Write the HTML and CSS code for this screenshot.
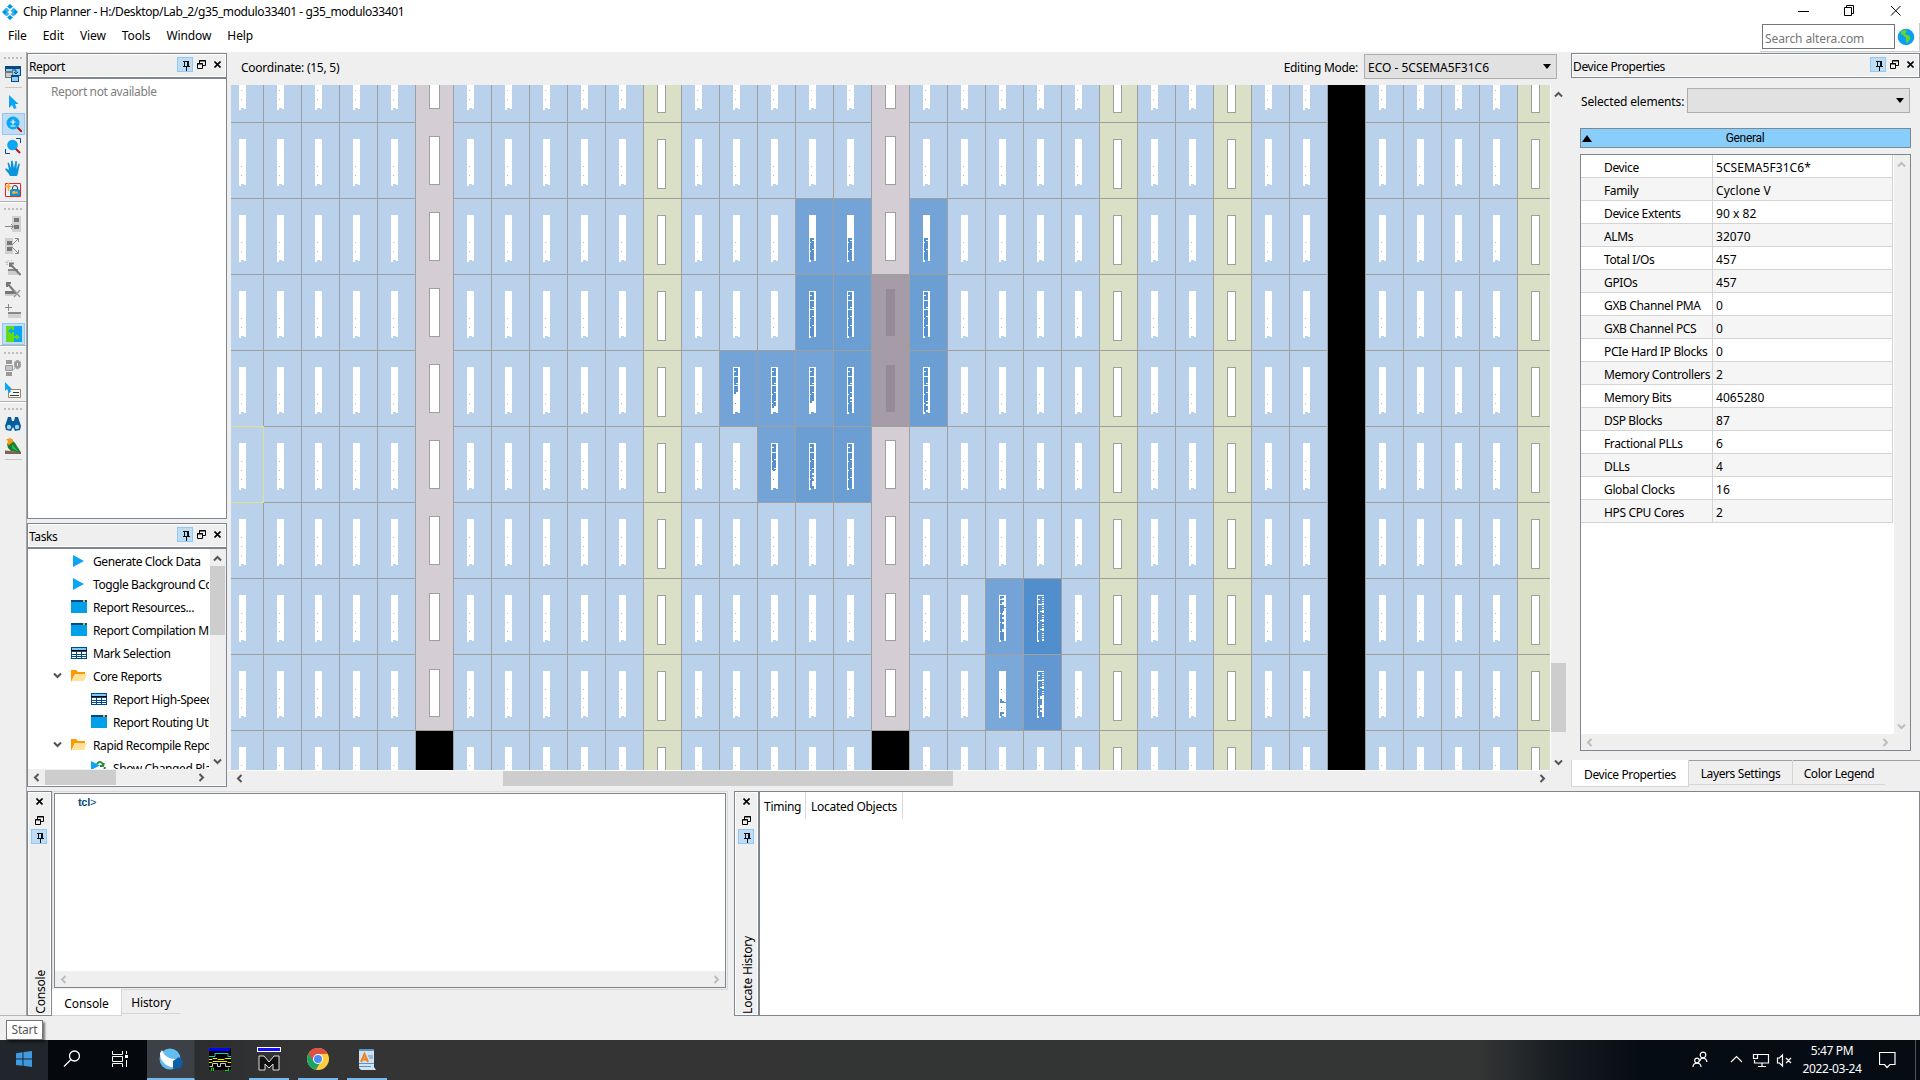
FILE: index.html
```html
<!DOCTYPE html>
<html lang="en">
<head>
<meta charset="utf-8">
<title>Chip Planner</title>
<link rel="stylesheet" href="styles.css">
</head>
<body>
<svg class="defs" aria-hidden="true">
  <symbol id="pin" viewBox="0 0 16 15"><path d="M7.500 4v6M6 4.500h6M6 9.500h7M9.500 10v4" fill="none" stroke="#111"/><path d="M11 4v6" stroke="#111" stroke-width="2"/></symbol>
  <symbol id="float" viewBox="0 0 9 9"><path d="M2.500 3V.5h6v5H6M2 1h7M0 4h6" fill="none" stroke="#000"/><path d="M.5 3.500h5v5h-5z" fill="none" stroke="#000"/></symbol>
  <symbol id="close" viewBox="0 0 7 7"><path d="M.5.5l6 6M6.500.5l-6 6" stroke="#000" stroke-width="1.600"/></symbol>
  <symbol id="up" viewBox="0 0 9 7"><path d="M1 5.500L4.500 2 8 5.500" fill="none" stroke="currentColor" stroke-width="2"/></symbol>
  <symbol id="down" viewBox="0 0 9 7"><path d="M1 1.500L4.500 5 8 1.500" fill="none" stroke="currentColor" stroke-width="2"/></symbol>
  <symbol id="left" viewBox="0 0 7 9"><path d="M5.500 1L2 4.500 5.500 8" fill="none" stroke="currentColor" stroke-width="2"/></symbol>
  <symbol id="right" viewBox="0 0 7 9"><path d="M1.500 1L5 4.500 1.500 8" fill="none" stroke="currentColor" stroke-width="2"/></symbol>
  <symbol id="play" viewBox="0 0 16 16"><path d="M2 2v12l11-6z" fill="#0aa5f5"/></symbol>
  <symbol id="window" viewBox="0 0 16 16"><path d="M0 2h16v12H0z" fill="#00a0e8"/><path d="M0 1h16v2H0z" fill="#004a86"/><path d="M12 1h2v2h-2z" fill="#f9a825"/></symbol>
  <symbol id="table" viewBox="0 0 16 16"><path d="M0 2h16v12H0z" fill="#004a86"/><path d="M1 3h14v2H1z" fill="#7ec8f2"/><path d="M0 5h16v1H0z" fill="#000"/><path d="M1 7h4v2H1zM6 7h4v2H6zM11 7h4v2h-4zM1 10h4v1H1zM6 10h4v1H6zM11 10h4v1h-4zM1 12h4v1H1zM6 12h4v1H6zM11 12h4v1h-4z" fill="#fff"/></symbol>
  <symbol id="folder" viewBox="0 0 16 16"><path d="M0 2h5l2 2h7v2H4L0 14z" fill="#f90"/><path d="M4.500 6H16l-3 7H1z" fill="#ffe29a"/></symbol>
  <symbol id="changed" viewBox="0 0 16 16"><path d="M6 4c2-3 5-3 6 1M9 6h3l1-3M14 7l-1 4M8 11l-3 3" fill="none" stroke="#2e8b3d" stroke-width="2"/><path d="M0 1v9l9-4.500z" fill="#0aa5f5"/></symbol>
  <symbol id="cursor" viewBox="0 0 16 16"><path d="M4 1v13l3-3 2 4 2.500-1L10 10h3.500z" fill="#0aa5f5"/></symbol>
</svg>

<header class="top">
  <div class="titlebar">
    <svg class="logo" width="16" height="16" viewBox="0 0 16 16"><g fill="#0095e0"><path d="M8 0l3 2.500-3 2.500-3-2.500zM8 11l3 2.500L8 16l-3-2.500zM0 8l3-3 2.500 3L3 11zM16 8l-3-3-2.500 3 2.500 3z"/><path d="M4.500 3.500l3 3-2 1.500-3-3zM11.500 3.500l2 2-3 3-2-1.500zM4.500 12.500l-2-2 3-2.500 2 2zM11.500 12.500l2-2-3-2-2 1.500z" fill="#35b2ee"/></g></svg>
    <h1 class="title">Chip Planner - H:/Desktop/Lab_2/g35_modulo33401 - g35_modulo33401</h1>
    <svg class="winctl" width="108" height="14" viewBox="0 0 108 14"><path d="M0 8.500h11M46.500 4.500h7v8h-7zM48.500 4V2.500h7v8H54M93 3l9.500 9.500M102.500 3L93 12.500" fill="none" stroke="#000"/></svg>
  </div>
  <div class="menubar">
    <nav class="menu"><span>File</span><span>Edit</span><span>View</span><span>Tools</span><span>Window</span><span>Help</span></nav>
    <div class="search"><div class="search-box">Search altera.com</div>
      <svg width="18" height="18" viewBox="0 0 18 18"><circle cx="9" cy="9" r="8.300" fill="#0a9ff0"/><path d="M4 3l4-1.500 2 2-2 2 1 1 3 1 1.500 2.500-3 5-1.500-1V10L6 7 4 6z" fill="#67d62a"/></svg></div>
  </div>
</header>

<div class="work">
  <aside class="toolbar">
    <div class="handle"></div>
    <div class="tool first"><svg width="16" height="16" viewBox="0 0 16 16"><path d="M0 0h16v10H0z" fill="#0a4a80"/><path d="M1 3h14v6H1z" fill="#8fd0f5"/><path d="M0 5h8v7H0z" fill="#777"/><path d="M1 7h6v4H1z" fill="#ccc"/><path d="M6 9h8v7H6z" fill="#0a4a80"/><path d="M7 11h6v4H7z" fill="#8fd0f5"/><path d="M7 4h4v4M9 6l2 2 2-2" stroke="#0a4a80" fill="none"/></svg></div>
    <div class="sep"></div>
    <div class="tool"><svg width="16" height="16"><use href="#cursor"/></svg></div>
    <div class="tool on"><svg width="16" height="16" viewBox="0 0 16 16"><path d="M11 11l5 5" stroke="#b11" stroke-width="2"/><circle cx="7" cy="7" r="6.500" fill="#0aa5f5"/><path d="M4.500 6h5M7 3.500v5M4.500 10h5" stroke="#fff" stroke-width="1.200"/></svg></div>
    <div class="tool"><svg width="16" height="16" viewBox="0 0 16 16"><path d="M10 10l5 5" stroke="#b11" stroke-width="2"/><circle cx="7.500" cy="7" r="5.300" fill="#0aa5f5"/><path d="M11 .5h4.500V5M.5 11v4.500H5" fill="none" stroke="#0a4aa0"/></svg></div>
    <div class="tool"><svg width="16" height="16" viewBox="0 0 16 16"><path d="M5 16c-1-3-4-5-5-7l1-.7L4 10 2.500 3l1.300-.5L6 8V1l1.500-.5L9 8l1.500-7 1.500.5L11.500 9l2-5.500 1.300.5L13 13l-1 3z" fill="#0a94dc"/></svg></div>
    <div class="tool"><svg width="16" height="14" viewBox="0 0 16 14"><path d="M.5.5h15v13H.5z" fill="none" stroke="#e22" /><path d="M5 13V7l2-1h6l2 1v6z" fill="#0a94dc"/><path d="M7.500 6V5a2.500 2.500 0 0 1 5 0v1" fill="none" stroke="#335"/><path d="M3.500 0v8M0 3.500h6" stroke="#f9a825" stroke-width="1.600"/><path d="M7 9.500h6M9 8v3" stroke="#f9a825" stroke-width="2"/></svg></div>
    <div class="rule"></div>
    <div class="handle"></div>
    <div class="tool"><svg width="16" height="16" viewBox="0 0 16 16"><path d="M7 0h9v16H7z" fill="#d0d0d0"/><path d="M9 2h5v4H9zM9 9h5v4H9z" fill="#777"/><path d="M0 10.500h8M6 8l2.500 2.500L6 13" fill="none" stroke="#888"/></svg></div>
    <div class="tool"><svg width="16" height="16" viewBox="0 0 16 16"><path d="M0 0h8v16H0z" fill="#d0d0d0"/><path d="M2 3h5v4H2zM2 9h5v4H2z" fill="#777"/><path d="M7 7l6-6M10 .5h3.500V4M7 9l6 6M10 15.500h3.500V12" fill="none" stroke="#888"/></svg></div>
    <div class="tool"><svg width="16" height="16" viewBox="0 0 16 16"><path d="M3 10h10v5H3z" fill="#ccc"/><path d="M3 9h10v2H3z" fill="#888"/><path d="M5 4l10.500 11" stroke="#777" stroke-width="2"/><path d="M5 7V3.500h4" fill="none" stroke="#777" stroke-width="2"/><path d="M0 2l3 1M3 0v2M1 5l2-1M6 1l1-1" stroke="#bbb"/></svg></div>
    <div class="tool"><svg width="16" height="16" viewBox="0 0 16 16"><path d="M0 9h11v3H0z" fill="#777"/><path d="M0 12h9v2H0z" fill="#ccc"/><path d="M2 1l7 8M2 5V1h4" fill="none" stroke="#777" stroke-width="2"/><path d="M9 8l6 7M15 8l-6 7" stroke="#999" stroke-width="1.500"/></svg></div>
    <div class="tool"><svg width="16" height="16" viewBox="0 0 16 16"><path d="M3.500 0v7M0 3.500h7" stroke="#888"/><path d="M3 8h13v2H3z" fill="#888"/><path d="M3 10h13v4H3z" fill="#d0d0d0"/></svg></div>
    <div class="tool on"><svg width="16" height="16" viewBox="0 0 16 16"><path d="M0 0h8v16H0z" fill="#62dc14"/><path d="M8 0h8v16H8z" fill="#0aa5f5"/><path d="M2 5l4-3v2h3v2H6v2z" fill="#0aa5f5"/><path d="M14 11l-4-3v2H7v2h3v2z" fill="#62dc14"/></svg></div>
    <div class="rule"></div>
    <div class="handle"></div>
    <div class="tool"><svg width="16" height="16" viewBox="0 0 16 16"><path d="M1 0h6v4H1zM1 12h6v4H1z" fill="#999"/><path d="M.5 5.500h7v5h-7z" fill="#c4c4c4" stroke="#999"/><path d="M12.500 0l3 2v5l-3 2-3-2V2zM8 10l2-2" fill="#999" stroke="#aaa"/><path d="M12.500 3v3" stroke="#eee"/></svg></div>
    <div class="tool"><svg width="16" height="16" viewBox="0 0 16 16"><path d="M3.500 7.500h12v8h-12z" fill="#fff8e0" stroke="#a08070"/><path d="M8 10.500h6M5 13.500h9" stroke="#0a4a80"/><path d="M0 0v9l2-2 2 4 2-1-1-3h2z" fill="#0aa5f5"/></svg></div>
    <div class="rule"></div>
    <div class="handle"></div>
    <div class="tool"><svg width="16" height="14" viewBox="0 0 16 14"><path d="M3 0h3l1 4h2l1-4h3l3 9-1 4-5 1-2-4-2 4-5-1-1-4z" fill="#0a5c9c"/><circle cx="4" cy="10" r="2.200" fill="#9bd6f5"/><circle cx="12" cy="10" r="2.200" fill="#9bd6f5"/></svg></div>
    <div class="tool"><svg width="16" height="16" viewBox="0 0 16 16"><path d="M0 12.500l16 1.500v2H0z" fill="#806058"/><path d="M2 6l6-3 2 2 6 9.500-4-.5-6-1-3-3z" fill="#1d7a2e"/><path d="M7 6l7 8-7-3.500z" fill="#12c04a"/><path d="M1 1.500L5 0l3 1.500v2.500L4 7 2 6l1-3z" fill="#f59a1a"/></svg></div>
    <div class="sep"></div>
  </aside>

  <div class="docks">
    <div class="upper">
      <div class="left-dock">
        <section class="panel report">
          <div class="panel-head"><span>Report</span><div class="ctl"><svg class="pin"><use href="#pin"/></svg><svg class="flt"><use href="#float"/></svg><svg class="cls"><use href="#close"/></svg></div></div>
          <div class="report-body">Report not available</div>
        </section>
        <section class="panel tasks">
          <div class="panel-head"><span>Tasks</span><div class="ctl"><svg class="pin"><use href="#pin"/></svg><svg class="flt"><use href="#float"/></svg><svg class="cls"><use href="#close"/></svg></div></div>
          <div class="tree-wrap">
            <ul class="tree">
              <li><svg class="ic"><use href="#play"/></svg><span>Generate Clock Data</span></li>
              <li><svg class="ic"><use href="#play"/></svg><span>Toggle Background Color</span></li>
              <li><svg class="ic"><use href="#window"/></svg><span>Report Resources...</span></li>
              <li><svg class="ic"><use href="#window"/></svg><span>Report Compilation Messages</span></li>
              <li><svg class="ic"><use href="#table"/></svg><span>Mark Selection</span></li>
              <li class="parent"><svg class="arr"><use href="#down"/></svg><svg class="ic"><use href="#folder"/></svg><span>Core Reports</span></li>
              <li class="child"><svg class="ic"><use href="#table"/></svg><span>Report High-Speed Tiles</span></li>
              <li class="child"><svg class="ic"><use href="#window"/></svg><span>Report Routing Utilization</span></li>
              <li class="parent"><svg class="arr"><use href="#down"/></svg><svg class="ic"><use href="#folder"/></svg><span>Rapid Recompile Reports</span></li>
              <li class="child"><svg class="ic"><use href="#changed"/></svg><span>Show Changed Placement</span></li>
            </ul>
            <div class="vscroll"><svg class="av"><use href="#up"/></svg><i class="thumb tree-v"></i><svg class="av end"><use href="#down"/></svg></div>
          </div>
          <div class="hscroll tree-hs"><svg class="ah"><use href="#left"/></svg><i class="thumb tree-h"></i><svg class="ah end"><use href="#right"/></svg></div>
        </section>
      </div>

      <main class="center">
        <div class="mapbar"><span class="coord">Coordinate: (15, 5)</span><span class="mode">Editing Mode:</span><div class="combo mode-combo">ECO - 5CSEMA5F31C6<i class="tri"></i></div></div>
        <div class="map-area">
          <svg id="chip" class="chip" width="1319" height="685" viewBox="231 85 1319 685" shape-rendering="crispEdges"></svg>
          <div class="vscroll map-v"><svg class="av"><use href="#up"/></svg><i class="thumb map-vt"></i><svg class="av end"><use href="#down"/></svg></div>
        </div>
        <div class="hscroll map-h"><svg class="ah"><use href="#left"/></svg><i class="thumb map-ht"></i><svg class="ah end"><use href="#right"/></svg></div>
      </main>

      <aside class="right-dock">
        <div class="panel-head boxed"><span>Device Properties</span><div class="ctl"><svg class="pin"><use href="#pin"/></svg><svg class="flt"><use href="#float"/></svg><svg class="cls"><use href="#close"/></svg></div></div>
        <div class="selrow"><span>Selected elements:</span><div class="combo sel-combo"><i class="tri"></i></div></div>
        <div class="general"><i class="tri-up"></i><span>General</span></div>
        <div class="props">
          <div class="props-main">
            <dl>
              <dt>Device</dt><dd>5CSEMA5F31C6*</dd>
              <dt>Family</dt><dd>Cyclone V</dd>
              <dt>Device Extents</dt><dd>90 x 82</dd>
              <dt>ALMs</dt><dd>32070</dd>
              <dt>Total I/Os</dt><dd>457</dd>
              <dt>GPIOs</dt><dd>457</dd>
              <dt>GXB Channel PMA</dt><dd>0</dd>
              <dt>GXB Channel PCS</dt><dd>0</dd>
              <dt>PCIe Hard IP Blocks</dt><dd>0</dd>
              <dt>Memory Controllers</dt><dd>2</dd>
              <dt>Memory Bits</dt><dd>4065280</dd>
              <dt>DSP Blocks</dt><dd>87</dd>
              <dt>Fractional PLLs</dt><dd>6</dd>
              <dt>DLLs</dt><dd>4</dd>
              <dt>Global Clocks</dt><dd>16</dd>
              <dt>HPS CPU Cores</dt><dd>2</dd>
            </dl>
            <div class="vscroll off"><svg class="av"><use href="#up"/></svg><svg class="av end"><use href="#down"/></svg></div>
          </div>
          <div class="hscroll off props-h"><svg class="ah"><use href="#left"/></svg><svg class="ah end"><use href="#right"/></svg></div>
        </div>
        <div class="tabs dev-tabs"><span class="tab active">Device Properties</span><span class="tab">Layers Settings</span><span class="tab last">Color Legend</span></div>
      </aside>
    </div>

    <div class="lower">
      <section class="console">
        <div class="side-head"><svg class="cls"><use href="#close"/></svg><svg class="flt"><use href="#float"/></svg><svg class="pin"><use href="#pin"/></svg><span>Console</span></div>
        <div class="console-main">
          <div class="console-frame"><div class="console-box"><div class="prompt">tcl<b>&gt;</b></div><div class="hscroll off console-h"><svg class="ah"><use href="#left"/></svg><svg class="ah end"><use href="#right"/></svg></div></div></div>
          <div class="tabs con-tabs"><span class="tab active">Console</span><span class="tab last">History</span></div>
        </div>
      </section>
      <section class="locate">
        <div class="side-head"><svg class="cls"><use href="#close"/></svg><svg class="flt"><use href="#float"/></svg><svg class="pin"><use href="#pin"/></svg><span>Locate History</span></div>
        <div class="locate-body"><span class="th">Timing</span><span class="th wide">Located Objects</span></div>
      </section>
    </div>
  </div>
</div>

<div class="status"><div class="tooltip">Start</div></div>

<footer class="taskbar">
  <div class="tb start"><svg width="16" height="16" viewBox="0 0 16 16"><path d="M0 2.200l6.500-.9v6.200H0zM7.500 1.100L16 0v7.500H7.500zM0 8.500h6.500v6.300L0 13.900zM7.500 8.500H16V16l-8.500-1.200z" fill="#3f9ae0"/></svg></div>
  <div class="tb dark"><svg width="18" height="18" viewBox="0 0 18 18"><circle cx="11.500" cy="6" r="5" fill="none" stroke="#fff" stroke-width="1.300"/><path d="M8 9.500L1 16.500" stroke="#fff" stroke-width="1.300"/></svg></div>
  <div class="tb dark view"><svg width="17" height="16" viewBox="0 0 17 16"><path d="M.5 0v3.500h10V0M.5 5.500h10v5H.5zM.5 16v-3.500h10V16M14.500 0v3M14.500 9v7" fill="none" stroke="#fff"/><path d="M13 4h3v3h-3z" fill="#fff"/></svg></div>
  <div class="tb active"><svg width="24" height="24" viewBox="0 0 24 24"><circle cx="11" cy="12" r="10.500" fill="#64bdf0"/><path d="M1 6l2-3c2 6 7 9 13 9l1 8c-5 1-9-1-12-4C2 13 1 10 1 6z" fill="#fff"/><path d="M14 14l6-4 4 4-2 7-8 1z" fill="#0a5fa8"/></svg></div>
  <div class="tb grad"><svg width="24" height="24" viewBox="0 0 24 24"><path d="M.5.5h23v23H.5z" fill="#000" stroke="#333"/><path d="M1 1h21v3H1z" fill="#00f"/><path d="M1 9.500h6V6.500h13v3h3" fill="none" stroke="#1cc"/><path d="M1 12.500h3l1-1h4l1 1h6l1-1h6M1 15.500h3l1-1h14l1 1h3" fill="none" stroke="#ee0"/><path d="M1.500 19.500h3v-3h5v3h3v-3h5v3h5" fill="none" stroke="#ccc"/><path d="M3.500 24v-3h2v3M17 23.500h3M20.500 21v3" stroke="#0d0" fill="none"/></svg></div>
  <div class="tb run wide"><svg width="24" height="24" viewBox="0 0 24 24"><path d="M0 0h24v5H0z" fill="#fff"/><path d="M1 1h22v3H1z" fill="#11f"/><path d="M2 23V9h5l5 6 5-6h5v14h-6v-6l-4 4-4-4v6z" fill="#111" stroke="#ddd"/></svg></div>
  <div class="tb run"><svg width="22" height="22" viewBox="0 0 22 22"><circle cx="11" cy="11" r="11" fill="#ffcd40"/><path d="M11 11L1.500 5.500A11 11 0 0 0 9 21.800l5-8.500z" fill="#1da462"/><path d="M11 6h9.800A11 11 0 0 0 1.500 5.500L6.300 13z" fill="#dd5144"/><circle cx="11" cy="11" r="5" fill="#fff"/><circle cx="11" cy="11" r="4" fill="#4c8bf5"/></svg></div>
  <div class="tb run"><svg width="20" height="21" viewBox="0 0 20 21"><path d="M2 0h15v18l2 3H4l-2-2z" fill="#cfe3f3"/><path d="M2 0h15v2H2zM2 14h15v1H2zM2 17h12v1H2z" fill="#5b93c4"/><path d="M4 13L7.500 5 11 13M5 10.500h5" fill="none" stroke="#f08020" stroke-width="2"/><path d="M11 7h5M12 9h4" stroke="#5b93c4"/></svg></div>
  <div class="tray">
    <svg width="100" height="18" viewBox="0 0 100 18"><g fill="none" stroke="#fff" stroke-width="1.200"><circle cx="11" cy="4" r="2.800"/><path d="M8 10c0-4 6-4 7 1"/><circle cx="5" cy="9.500" r="2.300"/><path d="M1 16c0-5 8-5 8 0M39 11l5.500-5.500L50 11"/><path d="M65.500 3.500H76.500v8.500H62.500V9M66 15.500h8M70 12v3M61.500 3.500h4v4h-4z"/><path d="M85.500 7v5h2l3 3V4l-3 3zM94 7l5 5M99 7l-5 5"/></g></svg>
    <div class="clock"><span>5:47 PM</span><span>2022-03-24</span></div>
    <svg width="17" height="17" viewBox="0 0 17 17"><path d="M.5.500h15.500v12h-5l-3 3-2.500-3H.5z" fill="none" stroke="#fff" stroke-width="1.200"/></svg>
  </div>
</footer>
<script src="chip.js"></script>
</body>
</html>
```
FILE: styles.css
```css
* { box-sizing: border-box; }
html, body { height: 100%; }
body { margin: 0; width: 1920px; height: 1080px; overflow: hidden; display: flex; flex-direction: column; background: #efefef; color: #000; font: 12px/16px "Noto Sans", sans-serif; letter-spacing: -0.38px; white-space: nowrap; }
h1, ul, dl, dd { margin: 0; padding: 0; }
.defs { display: none; }
svg { display: block; flex: none; }

.top { height: 52px; background: #fff; flex: none; display: flex; flex-direction: column; }
.titlebar { height: 23px; display: flex; align-items: center; padding-left: 2px; }
.title { font-size: 12px; font-weight: 400; margin-left: 5px; flex: 1; }
.winctl { margin: -3px 14px 0 0; }
.menubar { height: 29px; display: flex; justify-content: space-between; }
.menu { display: flex; gap: 16px; padding: 5px 0 0 8px; letter-spacing: -0.1px; }
.search { display: flex; align-items: center; gap: 2px; width: 160px; padding: 0 0 1px 2px; border-right: 1px solid #ccc; border-bottom: 1px solid #ccc; }
.search-box { width: 133px; height: 25px; border: 1px solid #707580; color: #777; padding: 5px 2px; letter-spacing: -0.1px; line-height: 17px; }

.work { flex: none; height: 964px; display: flex; }
.toolbar { width: 27px; border-right: 1px solid #a5a5a5; border-bottom: 1px solid #b5b5b5; display: flex; flex-direction: column; flex: none; }
.handle { height: 10px; margin: 0 3px 0 4px; flex: none; background: repeating-linear-gradient(90deg, #bdbdbd 0 2px, transparent 2px 4px) 0 5px / 100% 2px no-repeat; }
.tool { height: 22px; width: 23px; margin-left: 2px; padding-right: 1px; display: flex; justify-content: center; align-items: center; flex: none; }
.tool.first { margin-top: 1px; }
.tool.on { background: #c0dcf3; border: 1px solid #90c8f6; padding: 0; }
.sep { height: 1px; background: #c8c8c8; margin: 2px 4px 3px 5px; flex: none; }
.rule { height: 2px; background: #b0b0b0; border-bottom: 1px solid #fff; flex: none; }

.docks { flex: 1; display: flex; flex-direction: column; }
.upper { height: 739px; flex: none; display: flex; }
.left-dock { width: 200px; padding-top: 1px; display: flex; flex-direction: column; gap: 4px; }
.panel { border: 1px solid #80868f; display: flex; flex-direction: column; background: #fff; }
.report { height: 466px; }
.tasks { height: 264px; }
.panel-head { height: 25px; flex: none; border-bottom: 2px solid #80868f; box-shadow: inset 0 0 0 1px #fff; background: #efefef; display: flex; justify-content: space-between; padding: 5px 5px 0 1px; }
.panel-head.boxed { height: 25px; border: 1px solid #80868f; padding-top: 5px; padding-right: 5px; }
.ctl { display: flex; margin-top: -2px; }
.pin { width: 16px; height: 15px; background: #c0dcf3; box-shadow: inset 0 0 0 1px #90c8f6; }
.flt { width: 9px; height: 9px; margin: 3px 8px 0 4px; }
.cls { width: 7px; height: 7px; margin-top: 4px; }
.report-body { color: #808080; padding: 5px 0 0 23px; }
.tree-wrap { display: flex; height: 220px; overflow: hidden; }
.tree { width: 181px; list-style: none; overflow: hidden; padding-top: 1px; flex: none; margin-right: 1px; }
.tree li { height: 23px; display: flex; align-items: center; padding-left: 43px; }
.tree li.child { padding-left: 63px; }
.tree li.parent { padding-left: 25px; }
.tree span { margin-left: 6px; letter-spacing: -0.4px; }
.ic { width: 16px; height: 16px; margin-top: -2px; }
.arr { width: 9px; height: 7px; margin: -3px 9px 0 0; color: #505050; }

.vscroll { width: 16px; display: flex; flex-direction: column; align-items: center; background: #efefef; color: #555; padding: 6px 1px 4px 0; }
.hscroll { height: 16px; display: flex; align-items: center; background: #efefef; color: #555; padding: 0 5px; }
.off { color: #bdbdbd; }
.av { width: 9px; height: 7px; }
.ah { width: 7px; height: 9px; }
.vscroll .end { margin-top: auto; }
.hscroll .end { margin-left: auto; }
.thumb { background: #cdcdcd; flex: none; }
.tree-v { width: 15px; height: 69px; margin-top: 4px; }
.tree-h { width: 71px; height: 15px; margin-left: 5px; }
.tree-hs { padding-right: 21px; }

.center { width: 1344px; display: flex; flex-direction: column; }
.mapbar { height: 33px; display: flex; padding-left: 14px; }
.coord { padding-top: 8px; letter-spacing: -0.25px; flex: 1; }
.mode { padding: 8px 6px 0 0; letter-spacing: -0.28px; }
.combo { background: #e1e1e1; border: 1px solid #adadad; display: flex; justify-content: space-between; padding: 5px 5px 0 3px; }
.mode-combo { width: 193px; height: 25px; margin: 2px 14px 0 0; letter-spacing: 0; }
.tri { border: 4px solid transparent; border-top: 5px solid #000; border-bottom: 0; height: 0; margin: 4px 0 0 auto; }
.map-area { height: 685px; padding-left: 4px; display: flex; }
.map-v { border-left: 1px solid #fff; width: 17px; }
.map-vt { width: 15px; height: 69px; margin-top: 565px; }
.map-h { width: 1324px; padding: 0 5px 1px 9px; border-top: 1px solid #fff; height: 17px; }
.map-ht { width: 450px; height: 15px; margin-left: 260px; }

.right-dock { width: 349px; padding-top: 1px; display: flex; flex-direction: column; }
.selrow { display: flex; padding: 10px 0 0 10px; height: 50px; letter-spacing: -0.15px; flex: none; }
.selrow span { width: 106px; padding-top: 6px; }
.sel-combo { width: 223px; height: 25px; }
.general { height: 20px; width: 331px; margin-left: 9px; background: #87cefa; border: 1px solid #80868f; display: flex; align-items: center; font: 12px/16px Roboto, sans-serif; letter-spacing: -0.3px; flex: none; }
.general span { flex: 1; text-align: center; padding-right: 12px; }
.tri-up { border: 5px solid transparent; border-bottom: 7px solid #000; border-top: 0; margin-left: 1px; }
.props { margin: 6px 0 0 9px; width: 331px; height: 597px; border: 1px solid #80868f; background: #fff; display: flex; flex-direction: column; flex: none; }
.props-main { height: 579px; display: flex; justify-content: space-between; }
dl { display: grid; grid-template-columns: 132px 180px; grid-auto-rows: 23px; }
dt, dd { border-right: 1px solid #d4d4d4; border-bottom: 1px solid #d4d4d4; padding-top: 5px; }
dt { padding-left: 23px; letter-spacing: -0.36px; }
dd { padding-left: 3px; letter-spacing: 0.05px; }
dt:nth-of-type(even), dd:nth-of-type(even) { background: #f5f5f5; }
.props-h { padding-right: 21px; }
.tabs { display: flex; }
.tab { border-right: 1px solid #d5d5d5; border-bottom: 1px solid #d5d5d5; text-align: center; }
.tab.last { border-right: 0; }
.dev-tabs { margin-top: 9px; height: 27px; letter-spacing: -0.38px; align-items: flex-start; background: linear-gradient(#a0a0a0, #a0a0a0) 0 0 / 100% 1px no-repeat; }
.tab.active { background: #fff; border-left: 1px solid #d5d5d5; }
.dev-tabs .tab { width: 104px; height: 25px; padding-top: 6px; }
.dev-tabs .active { width: 118px; height: 27px; padding-top: 7px; }
.dev-tabs .last { width: 92px; }

.lower { flex: 1; display: flex; }
.console { width: 707px; display: flex; }
.side-head { width: 25px; height: 225px; border: 1px solid #80868f; box-shadow: inset 0 0 0 1px #fff; display: flex; flex-direction: column; align-items: center; flex: none; padding-right: 1px; }
.side-head .cls { margin-top: 6px; }
.side-head .flt { margin: 11px 0 0; }
.side-head .pin { margin-top: 4px; }
.side-head span { writing-mode: vertical-rl; transform: rotate(180deg); margin-top: auto; margin-bottom: 1px; letter-spacing: -0.2px; width: 16px; margin-left: 3px; line-height: 16px; }
.console-main { width: 676px; }
.console-frame { height: 199px; padding: 1px 1px 2px 1px; border: 1px solid #d8d8d8; }
.console-box { height: 195px; border: 1px solid #80868f; background: #fff; display: flex; flex-direction: column; justify-content: space-between; }
.prompt { color: #0a4a80; font: 700 11px/16px "Liberation Sans", sans-serif; padding: 0 0 0 23px; letter-spacing: -0.3px; }
.prompt b { font-weight: 400; }
.con-tabs { height: 26px; align-items: flex-start; letter-spacing: -0.1px; }
.con-tabs .active { width: 70px; height: 27px; padding-top: 7px; border-left: 0; margin-top: -1px; }
.con-tabs .last { width: 58px; height: 24px; padding-top: 5px; }
.locate { flex: 1; display: flex; height: 225px; border: 1px solid #80868f; background: #fff; }
.locate .side-head { height: 223px; border: 0; border-right: 2px solid #80868f; background: #efefef; box-shadow: inset 1px 1px 0 #fff, inset -1px -1px 0 #fff; }
.locate-body { display: flex; align-items: flex-start; letter-spacing: -0.28px; }
.th { height: 27px; width: 46px; padding: 7px 0 0 4px; border-right: 1px solid #d8d8d8; }
.th.wide { width: 97px; padding-left: 5px; }

.status { height: 24px; flex: none; }
.tooltip { position: relative; left: 6px; top: 4px; width: 37px; height: 20px; border: 1px solid #767676; background: #fff; color: #575757; text-align: center; line-height: 18px; letter-spacing: -0.2px; box-shadow: 2px 2px 2px rgba(0,0,0,.5); z-index: 2; }

.taskbar { height: 40px; display: flex; background: linear-gradient(90deg, #2b2d2e 195px, #343434 300px, #343535 1480px, #171c20 1560px, #060c14 1640px); flex: none; letter-spacing: 0; }
.tb { width: 49px; display: flex; align-items: center; justify-content: center; border-bottom: 2px solid transparent; }
.start { width: 48px; background: #20262b; }
.dark { background: #05080d; }
.dark:not(.view) { padding-right: 2px; }
.view { width: 50px; padding-right: 4px; }
.tb.active { width: 48px; background: #3c4148; border-color: #76b9ed; border-right: 1px solid #2f3539; }
.grad { width: 50px; margin-right: 3px; }
.tb.run { width: 40px; margin: 0 5px 0 4px; border-color: #76b9ed; }
.tb.run.wide { margin: 0 5px 0 1px; }
.tray { margin-left: auto; display: flex; align-items: center; color: #fff; padding-right: 19px; border-right: 1px solid #555; margin-right: 4px; }
.clock { width: 60px; margin: 0 17px 0 10px; display: flex; flex-direction: column; align-items: center; font-size: 12px; line-height: 18px; letter-spacing: -0.35px; }
```
FILE: chip.js
```js
// Chip floorplan: 38x76 tiles, columns of logic, memory, DSP and clock resources.
const svg = document.getElementById('chip');
const CW = 38, RH = 76, X0 = 225, LINE = '#9f9f9f', INK = '#5591cf';
const PINK = [5, 17], GREEN = [11, 23, 26, 34], BLACK = 29;
let out = '';
const rect = (x, y, w, h, f) => { out += `<rect x="${x}" y="${y}" width="${w}" height="${h}" fill="${f}"/>`; };

const ticks = [[1, 4, 2, 1], [3, 16, 2, 1], [3, 25, 2, 1], [1, 27, 1, 1], [3, 34, 2, 1], [1, 36, 1, 1]];
const full = [...ticks, [1, 9, 4, 1], [1, 18, 4, 1]];
const low = [[1, 4, 2, 1], [1, 9, 4, 1], [3, 16, 2, 1], [1, 18, 1, 1], [3, 25, 2, 1], [1, 27, 1, 1], [3, 34, 2, 1], [1, 36, 1, 1]];
const comb = (to) => { const a = []; for (let y = 2; y < to; y++) if (y % 9 !== 0 && (y % 9) % 2 === 0) a.push([5, y, 2, 1]); return a; };
const combBreaks = [[1, 4, 2, 1], [1, 9, 6, 1], [3, 16, 4, 1], [1, 18, 1, 1], [3, 25, 4, 1], [1, 27, 1, 1], [3, 34, 4, 1], [1, 36, 1, 1]];
// key "col,rowY": tile fill, inked rectangles, white cut-outs
const used = {
  '15,198': ['#74a4d7', [[1, 23, 4, 22]], ticks], '16,198': ['#74a4d7', [[1, 23, 4, 22]], ticks], '18,198': ['#74a4d7', [[1, 23, 4, 22]], ticks],
  '15,274': ['#6b9fd3', [[1, 1, 4, 44]], full], '16,274': ['#6b9fd3', [[1, 1, 4, 44]], full], '18,274': ['#6b9fd3', [[1, 1, 4, 44]], full],
  '13,350': ['#74a4d7', [[1, 1, 4, 24], [1, 25, 2, 2], [2, 36, 1, 1]], full],
  '14,350': ['#74a4d7', [[1, 1, 4, 38], [1, 39, 2, 2]], full],
  '15,350': ['#74a4d7', [[1, 1, 4, 33], [1, 34, 2, 2]], full],
  '16,350': ['#6b9fd3', [[1, 1, 4, 44]], [...full, [3, 30, 2, 2]]],
  '18,350': ['#6b9fd3', [[1, 1, 4, 44]], [...full, [3, 37, 2, 2], [3, 43, 2, 2]]],
  '14,426': ['#74a4d7', [[1, 1, 4, 26], [1, 27, 3, 1], [2, 36, 1, 1]], low],
  '15,426': ['#6b9fd3', [[1, 1, 4, 44]], [...low, [3, 30, 2, 2], [4, 34, 1, 2], [3, 38, 2, 5]]],
  '16,426': ['#6b9fd3', [[1, 1, 4, 44]], low],
  '20,578': ['#74a4d7', [[1, 1, 4, 8], [1, 10, 4, 35], [5, 12, 2, 1]], [[1, 4, 2, 1], [3, 3, 2, 2], [3, 7, 2, 2], [4, 16, 1, 2], [3, 18, 2, 2], [3, 22, 2, 2], [3, 27, 2, 2], [1, 18, 1, 1], [1, 27, 1, 1], [3, 34, 2, 3], [1, 36, 1, 1]]],
  '21,578': ['#508ecd', [[1, 1, 6, 44]], [...comb(45), ...combBreaks]],
  '20,654': ['#7aa8d8', [[2, 18, 1, 1], [1, 28, 2, 4], [3, 30, 2, 2], [5, 31, 2, 1], [2, 36, 1, 1], [1, 41, 4, 4]], [[3, 43, 2, 2]]],
  '21,654': ['#6297d1', [[1, 1, 6, 24], [1, 25, 4, 20]], [...comb(25), [1, 4, 2, 1], [1, 9, 6, 1], [3, 16, 4, 1], [1, 18, 1, 1], [3, 25, 4, 3], [1, 27, 1, 1], [3, 34, 2, 3], [3, 39, 2, 2], [1, 36, 1, 1]]]
};

for (let c = 0; c < 35; c++) {
  const x = X0 + c * CW;
  for (let y = 46; y < 770; y += RH) {
    if (c === BLACK) { rect(x, y, CW, RH, '#000'); rect(x, y, 1, RH, LINE); continue; }
    if (PINK.includes(c)) {
      if (y === 730) { rect(x, y, CW, RH, '#000'); rect(x, y, CW, 1, LINE); rect(x, y, 1, RH, LINE); continue; }
      const dark = c === 17 && (y === 274 || y === 350);
      rect(x, y, CW, RH, dark ? '#a69ca8' : '#d4ced4');
      rect(x, y, 1, RH, LINE);
      if (y === 274 && c === 17) rect(x, y, CW, 1, LINE);
      if (y === 426 && c === 17) rect(x, y, CW, 1, LINE);
      const dy = y >= 578 ? 15 : 14, h = y >= 578 ? 48 : 49;
      rect(x + 14, y + dy, 11, h, LINE);
      rect(x + 15, y + dy + 1, 9, h - 2, dark ? '#968a98' : '#fff');
      continue;
    }
    const green = GREEN.includes(c), tile = used[c + ',' + y];
    const fill = green ? '#dae0c6' : tile ? tile[0] : '#bad1ec';
    rect(x, y, CW, RH, fill);
    rect(x, y, CW, 1, LINE);
    rect(x, y, 1, RH, LINE);
    if (green) { rect(x + 14, y + 17, 9, 50, LINE); rect(x + 15, y + 18, 7, 48, '#fff'); continue; }
    const sx = x + 14, sy = y + 17;
    rect(sx, sy, 7, 45, '#fff');
    rect(sx, sy + 45, 2, 2, '#fff');
    rect(sx + 5, sy + 45, 2, 1, '#fff');
    if (tile) {
      tile[1].forEach(r => rect(sx + r[0], sy + r[1], r[2], r[3], INK));
      tile[2].forEach(r => rect(sx + r[0], sy + r[1], r[2], r[3], '#fff'));
    } else {
      if (y >= 426) rect(sx + 2, sy + 18, 1, 1, '#b3bccb');
      rect(sx + 2, sy + 27, 1, 1, '#b3bccb');
      rect(sx + 2, sy + 36, 1, 1, '#b3bccb');
    }
    rect(sx + 2, sy + 45, 3, 1, fill);
  }
}
rect(231, 426, 33, 1, '#e3e08a');
rect(231, 502, 33, 1, '#e3e08a');
rect(263, 426, 1, 77, '#e3e08a');
svg.innerHTML = out;
```
